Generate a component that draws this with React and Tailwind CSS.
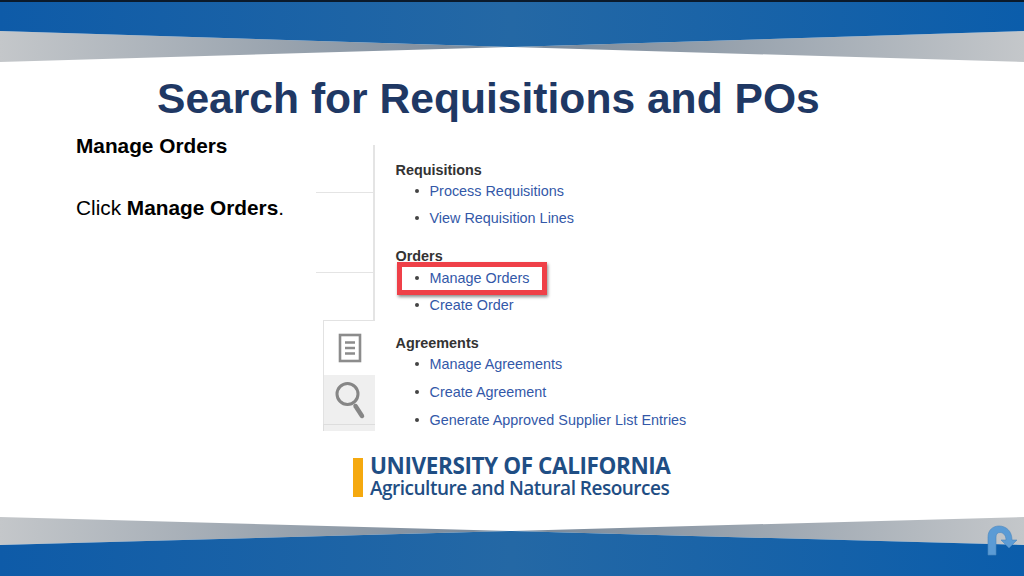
const font = { fontFamily: '"Liberation Sans", Arial, sans-serif' };

const TopBand = () => (
  <svg className="block w-full h-[63px] shrink-0" viewBox="0 0 1024 63" preserveAspectRatio="none">
    <defs>
      <linearGradient id="blueTop" x1="0" x2="1" y1="0" y2="0">
        <stop offset="0" stopColor="#0e5ba8" />
        <stop offset="0.5" stopColor="#2468a5" />
        <stop offset="1" stopColor="#0b5dab" />
      </linearGradient>
      <linearGradient id="greyTop" x1="0" x2="1" y1="0" y2="0">
        <stop offset="0" stopColor="#c4c7ca" />
        <stop offset="0.45" stopColor="#7e8d9d" />
        <stop offset="0.55" stopColor="#7e8d9d" />
        <stop offset="1" stopColor="#c4c7ca" />
      </linearGradient>
    </defs>
    <rect width="1024" height="63" fill="#fff" />
    <polygon points="0,31 512,47 1024,31 1024,62 512,47 0,62" fill="url(#greyTop)" />
    <polygon points="0,0 1024,0 1024,31 512,47 0,31" fill="url(#blueTop)" />
    <rect width="1024" height="2" fill="#0b1a2b" />
  </svg>
);

const BottomBand = () => (
  <svg className="block w-full h-[60px] shrink-0" viewBox="0 516 1024 60" preserveAspectRatio="none">
    <defs>
      <linearGradient id="blueBot" x1="0" x2="1" y1="0" y2="0">
        <stop offset="0" stopColor="#0e5ba8" />
        <stop offset="0.5" stopColor="#2468a5" />
        <stop offset="1" stopColor="#0b5dab" />
      </linearGradient>
      <linearGradient id="greyBot" x1="0" x2="1" y1="0" y2="0">
        <stop offset="0" stopColor="#c4c7ca" />
        <stop offset="0.45" stopColor="#7e8d9d" />
        <stop offset="0.55" stopColor="#7e8d9d" />
        <stop offset="1" stopColor="#c4c7ca" />
      </linearGradient>
    </defs>
    <polygon points="0,517 512,531 1024,517 1024,545 512,531 0,545" fill="url(#greyBot)" />
    <polygon points="0,545 512,531 1024,545 1024,576 0,576" fill="url(#blueBot)" />
  </svg>
);

const ReturnIcon = () => (
  <svg className="absolute left-[987px] top-[525px]" width="32" height="32" viewBox="0 0 32 32">
    <path
      d="M1 30 V12 C1 5 6 1 12 1 C19 1 25 6 25 15 H30 L22 23 L14 15 H19 C19 10 16 7.5 13 7.5 C10.5 7.5 9 9 9 12 V30 Z"
      fill="#5b9bd5"
      stroke="#4a86bd"
      strokeWidth="0.6"
    />
  </svg>
);

const DocIcon = () => (
  <svg width="24" height="30" viewBox="0 0 24 30" fill="none" stroke="#8c8c8c">
    <rect x="2" y="2" width="20" height="26" strokeWidth="2.6" />
    <path d="M7 9.5 H17 M7 15 H17 M7 20.5 H17" strokeWidth="2.4" />
  </svg>
);

const SearchIcon = () => (
  <svg width="32" height="40" viewBox="0 0 32 40" fill="none" stroke="#868686">
    <circle cx="13.5" cy="14" r="10.5" strokeWidth="3" />
    <path d="M21.5 26 L28 36" strokeWidth="4.5" strokeLinecap="round" />
  </svg>
);

const Heading = ({ children, className }) => (
  <div className={`h-[18px] leading-[18px] text-[14.4px] font-bold text-[#333333] ${className}`}>{children}</div>
);

const LinkRow = ({ children, className }) => (
  <div className={`h-[18px] flex items-center pl-[19.5px] text-[14.4px] leading-[18px] text-[#3358a8] ${className}`}>
    <span className="w-[4px] h-[4px] rounded-full bg-[#444444] mr-[10.5px]" />
    <span>{children}</span>
  </div>
);

const App = () => (
  <div className="relative w-[1024px] h-[576px] overflow-hidden bg-white flex flex-col" style={font}>
    <TopBand />

    <main className="flex-1 flex flex-col">
      <h1 className="pt-[10px] pl-[157px] text-[42.6px] leading-[50px] font-bold text-[#1f3864] whitespace-nowrap">
        Search for Requisitions and POs
      </h1>

      <div className="flex">
        <div className="w-[316px] pl-[76px] text-[20.8px] leading-[24px] text-black">
          <p className="mt-[11px] font-bold">Manage Orders</p>
          <p className="mt-[38px]">
            Click <b>Manage Orders</b>.
          </p>
        </div>

        <div className="relative flex mt-[22px] h-[286px]">
          {/* left rail of the screenshot */}
          <div className="w-[59px] flex flex-col">
            <div className="h-[175px] border-r-2 border-[#e4e4e4] flex flex-col">
              <div className="mt-[47px] h-px bg-[#e4e4e4]" />
              <div className="mt-[79px] h-px bg-[#e4e4e4]" />
            </div>
            <div className="ml-[7px] h-[55px] bg-white border border-b-0 border-r-0 border-[#e2e2e2] flex items-center justify-center">
              <DocIcon />
            </div>
            <div className="ml-[7px] h-[49px] bg-[#efefef] border-l border-[#e2e2e2] flex items-center justify-center">
              <SearchIcon />
            </div>
            <div className="ml-[7px] h-[7px] bg-[#efefef] border-t border-l border-[#dddddd]" />
          </div>

          <div className="pl-[20.5px] pt-[16px] whitespace-nowrap">
            <Heading>Requisitions</Heading>
            <LinkRow className="mt-[3px]">Process Requisitions</LinkRow>
            <LinkRow className="mt-[9px]">View Requisition Lines</LinkRow>
            <Heading className="mt-[20px]">Orders</Heading>
            <LinkRow className="mt-[4px]">Manage Orders</LinkRow>
            <LinkRow className="mt-[9px]">Create Order</LinkRow>
            <Heading className="mt-[20px]">Agreements</Heading>
            <LinkRow className="mt-[3px]">Manage Agreements</LinkRow>
            <LinkRow className="mt-[10px]">Create Agreement</LinkRow>
            <LinkRow className="mt-[10px]">Generate Approved Supplier List Entries</LinkRow>
          </div>

          {/* highlight box */}
          <div className="absolute left-[81px] top-[117px] w-[150px] h-[33px] border-[5px] border-[#ef4048] shadow-[1px_2px_3px_rgba(0,0,0,0.45)]" />
        </div>
      </div>

      {/* logo */}
      <div className="mt-[27px] ml-[353px] flex items-stretch h-[39px] whitespace-nowrap" style={{ fontFamily: '"Open Sans", sans-serif' }}>
        <div className="w-[10px] bg-[#f5a90f]" />
        <div className="ml-[7px] text-[#1f4e84] font-bold flex flex-col justify-center">
          <div className="text-[22.5px] leading-[21px] tracking-[-0.4px]">UNIVERSITY OF CALIFORNIA</div>
          <div className="mt-px text-[19px] leading-[23px] font-semibold tracking-[-0.5px]">Agriculture and Natural Resources</div>
        </div>
      </div>
    </main>

    <BottomBand />
    <ReturnIcon />
  </div>
);

export default App;
